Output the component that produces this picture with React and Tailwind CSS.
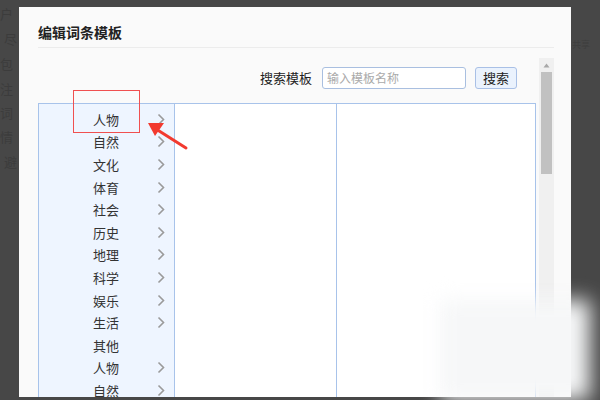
import React from 'react';

const categories = ['人物', '自然', '文化', '体育', '社会', '历史', '地理', '科学', '娱乐', '生活', '其他', '人物', '自然'];
const noArrow = ['其他'];

const bgText = [
  { t: '户', top: 4, left: 0 },
  { t: '尽', top: 29, left: 4 },
  { t: '包', top: 54, left: 0 },
  { t: '注', top: 79, left: 0 },
  { t: '词', top: 103, left: 0 },
  { t: '情', top: 127, left: 0 },
  { t: '避', top: 152, left: 4 },
];

function Chevron() {
  return (
    <svg width="8" height="13" viewBox="0 0 8 13" className="shrink-0">
      <polyline points="1.5,1.5 6.5,6.5 1.5,11.5" fill="none" stroke="#9a9a9a" strokeWidth="1.6" />
    </svg>
  );
}

export default function App() {
  return (
    <div className="relative w-[600px] h-[400px] overflow-hidden bg-[#474747] pt-[7px] pl-[19px] font-['Noto_Sans_CJK_SC',sans-serif]">
      {/* page text behind the overlay */}
      {bgText.map((b, i) => (
        <span key={i} className="absolute text-[13px] leading-[20px] text-[#3c3c3c]" style={{ top: b.top, left: b.left }}>
          {b.t}
        </span>
      ))}
      <span className="absolute top-[38px] left-[572px] text-[9px] text-[#3e3e3e]">共享</span>

      {/* Modal */}
      <div className="relative w-[552px] h-[390px] bg-[#fafafa] pl-[19px] pr-[17px] overflow-hidden">
        <div className="pt-[15px] h-[40px] text-[14px] leading-[20px] font-bold text-[#222]">编辑词条模板</div>
        <div className="h-[1px] bg-[#ececec]" />

        <div className="flex gap-[3px] mt-[10px]">
          {/* Main */}
          <div className="w-[498px]">
            <div className="mt-[9px] h-[22px] flex items-center justify-end pr-[19px]">
              <span className="text-[13px] text-[#222] mr-[10px]">搜索模板</span>
              <div className="w-[144px] h-[22px] border border-[#a9bfe0] rounded-[3px] bg-white flex items-center px-[4px] text-[12px] text-[#aaa]">
                输入模板名称
              </div>
              <div className="ml-[9px] w-[42px] h-[22px] border border-[#a9c0e6] rounded-[3px] bg-[#eaf2fd] flex items-center justify-center text-[13px] text-[#222]">
                搜索
              </div>
            </div>

            <div className="mt-[14px] h-[320px] border border-[#a8c3ea] flex">
              <div className="w-[136px] border-r border-[#a8c3ea] bg-[#eef5ff] pt-[4px]">
                {categories.map((c, i) => (
                  <div key={i} className="h-[22.6px] flex items-center pl-[54px] pr-[9px]">
                    <span className="text-[13px] text-[#333] leading-none">{c}</span>
                    <span className="flex-1" />
                    {!noArrow.includes(c) && <Chevron />}
                  </div>
                ))}
              </div>
              <div className="w-[162px] border-r border-[#a8c3ea] bg-white" />
              <div className="flex-1 bg-white" />
            </div>
          </div>

          {/* Scrollbar */}
          <div className="w-[15px] h-[340px] bg-[#f0f0f0] flex flex-col items-center">
            <svg width="7" height="5" viewBox="0 0 7 5" className="mt-[5px]">
              <polygon points="3.5,0.5 6.5,4.5 0.5,4.5" fill="#a8a8a8" />
            </svg>
            <div className="mt-[4px] w-[11px] h-[102px] bg-[#c1c1c1]" />
          </div>
        </div>
      </div>

      {/* annotation box */}
      <div className="absolute left-[73px] top-[90px] w-[67px] h-[43px] border border-[#f05050]" />
      {/* annotation arrow */}
      <svg className="absolute left-[140px] top-[115px]" width="60" height="40" viewBox="0 0 60 40">
        <line x1="46" y1="33" x2="16" y2="14" stroke="#f23a2f" strokeWidth="3" strokeLinecap="round" />
        <polygon points="8,8 24,8 15,21" fill="#f23a2f" />
      </svg>

      {/* watermark blur */}
      <div className="absolute left-[440px] top-[300px] w-[150px] h-[100px] bg-[#f6f7f8] blur-[10px]" />
    </div>
  );
}
